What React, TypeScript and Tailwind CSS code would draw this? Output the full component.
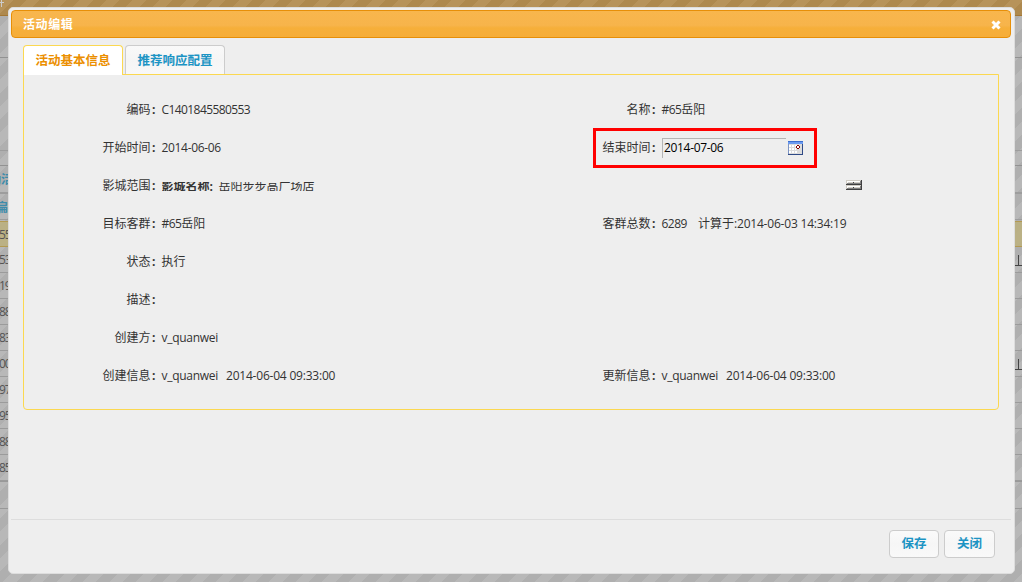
import React from "react";

const cjk = "font-['Open_Sans','Noto_Sans_CJK_SC',sans-serif]";

function L({ children, className = "tracking-[-0.53px]" }: { children: React.ReactNode; className?: string }) {
  return <span className={`whitespace-pre ${className}`}>{children}</span>;
}

function Field({ label, children }: { label: string; children?: React.ReactNode }) {
  return (
    <div className="flex h-[38px] w-[500px] items-center">
      <div className="w-[137.5px] shrink-0 whitespace-nowrap pt-px text-right">
        {label}
        <span className="inline-block w-[11px] pl-[1.5px] text-left font-bold">:</span>
      </div>
      <div className="flex items-center whitespace-pre pt-px">{children}</div>
    </div>
  );
}

function Stamp() {
  return (
    <>
      <span className="w-[64.5px]"><L className="tracking-[-0.28px]">v_quanwei</L></span>
      <L className="tracking-[-0.21px]">2014-06-04 09:33:00</L>
    </>
  );
}

const ids = ["55", "53", "19", "88", "83", "00", "97", "95", "88", "85"];

function PageBehind() {
  return (
    <div className="absolute inset-0 flex flex-col overflow-hidden bg-[repeating-linear-gradient(135deg,#b8b8b8_0px,#b8b8b8_9.4px,#afafaf_9.4px,#afafaf_18.8px)]">
      <div className="h-4 shrink-0 border-b border-[#a47733] bg-[repeating-linear-gradient(135deg,#b7935a_0px,#b7935a_9.4px,#ae894e_9.4px,#ae894e_18.8px)]">
        <svg width="5" height="8" viewBox="0 0 5 8">
          <path d="M0 2.5h4M1.5 0v7" stroke="#ccc" />
        </svg>
      </div>
      <div className="h-[42px] shrink-0 border-b border-[#929292]" />
      <div className="h-[93px] shrink-0 border-b border-[#9d9d9d]" />
      <div className="h-[15px] shrink-0 border-b border-[#929292]" />
      <div className="h-[27px] shrink-0 border-b border-[#9d9d9d] text-[12px] font-bold leading-[27px] text-[#3d8cab]">
        <span className="-ml-[11px]">动活</span>
      </div>
      <div className="h-[27px] shrink-0 border-b border-t border-[#9d9d9d] text-[12px] font-bold leading-[27px] text-[#3d8cab]">
        <span className="-ml-[4px]">扁</span>
      </div>
      <div className="mt-px">
        {ids.map((id, i) => (
          <div
            key={i}
            className={`flex h-[26px] justify-between border-b text-[12px] leading-[26px] tracking-[-1px] text-[#555] ${
              i === 0 ? "border-t border-[#b39a52] bg-[#bbb080]/90" : "border-[#9b9b9b]"
            }`}
          >
            <span className="-ml-px">{id}</span>
            {(i === 1 || i === 5) && (
              <svg width="7" height="12" viewBox="0 0 7 12" className="mt-[8px]" shapeRendering="crispEdges">
                <path d="M3 0h1v10h3v1H0v-1h3z" fill="#444" />
              </svg>
            )}
          </div>
        ))}
      </div>
      <div className="h-[28px] shrink-0 border-b border-t border-[#999]" />
    </div>
  );
}

function CalendarIcon() {
  return (
    <svg width="15" height="14" viewBox="0 0 15 14" shapeRendering="crispEdges">
      <rect width="15" height="14" fill="#7b93c4" />
      <rect x="1" y="3" width="13" height="10" fill="#dcdcdc" />
      <rect width="15" height="1" fill="#3c6fd0" />
      <rect x="0" y="1" width="15" height="2" fill="#6a9af0" />
      <path d="M1 4h2v2H1zM4 4h2v2H4zM7 4h2v2H7zM1 7h2v2H1zM4 7h2v2H4zM7 7h1v2H7zM1 10h2v2H1zM4 10h2v2H4zM7 10h2v2H7z" fill="#fff" />
      <path d="M9 4h2v1H9zM8 5h1v2H8zM11 5h1v2h-1zM9 7h2v1H9z" fill="#850000" />
      <rect x="9" y="5" width="2" height="2" fill="#fff" />
      <path d="M14 3h1v11H0v-1h14z" fill="#2f4a86" />
    </svg>
  );
}

function SpinHalf() {
  return (
    <svg width="16" height="5" viewBox="0 0 16 5" shapeRendering="crispEdges">
      <path d="M0 0h16v5H0z" fill="#d0ccc4" />
      <path d="M1 1h13v1H1zM1 1h1v2H1z" fill="#fff" />
      <path d="M2 2h12v1H2z" fill="#d4d0c8" />
      <path d="M1 3h14v1H1zM14 1h1v3h-1z" fill="#808080" />
      <path d="M0 4h16v1H0zM15 0h1v5h-1z" fill="#404040" />
      <path d="M7 2h1v1H7z" fill="#404040" />
    </svg>
  );
}

export default function App() {
  return (
    <div className={`relative h-[582px] w-[1022px] overflow-hidden text-[12px] leading-[18px] text-[#333] ${cjk}`}>
      <PageBehind />
      <div className="absolute left-2 top-[7px] flex h-[567px] w-[1007px] flex-col rounded-[5px] border border-[#ddd] bg-[#eee] p-[2px]">
        <header className="flex h-[28px] w-[1000px] shrink-0 items-center justify-between rounded-[4px] border border-[#e78f08] bg-[linear-gradient(#f8b64d,#f7b44b_55%,#f6af3a_65%,#f6ad38)] pl-[11px] pr-[9px] text-white">
          <b className="pt-px tracking-[0.6px]">活动编辑</b>
          <svg width="10" height="10" viewBox="0 0 10 10" className="mt-px shrink-0">
            <path d="M1.5 1.5 8.5 8.5M8.5 1.5 1.5 8.5" stroke="#fff" strokeWidth="3" />
          </svg>
        </header>
        <main className="h-[481px] shrink-0 pl-3 pt-[7px]">
          <div className="flex h-[30px] gap-[2px] text-[12.5px] font-bold">
            <div className="relative z-10 flex w-[100px] items-center justify-center rounded-t-[4px] border border-b-0 border-[#fbd850] bg-white text-[#eb8f00]">
              活动基本信息
            </div>
            <div className="flex h-[29px] w-[100px] items-center justify-center rounded-t-[4px] border border-b-0 border-[#ccc] bg-[linear-gradient(#f9f9f9,#f5f5f5_50%,#f8f8f8)] pt-px text-[#1c94c4]">
              推荐响应配置
            </div>
          </div>
          <section className="-mt-px grid h-[336px] w-[976px] grid-cols-[500px_1fr] content-start rounded-b-[4px] border border-[#fbd850] pt-[15px]">
            <Field label="编码"><L className="tracking-[-0.58px]">C1401845580553</L></Field>
            <Field label="名称"><L className="tracking-[-0.6px]">#65</L>岳阳</Field>
            <Field label="开始时间"><L className="tracking-[-0.33px]">2014-06-06</L></Field>
            <div className="relative">
              <Field label="结束时间">
                <div className="ml-[0.5px] flex h-5 w-[124px] items-center border-l border-t border-[#b5b5b5] pb-px pl-px text-black"><L className="tracking-[-0.33px]">2014-07-06</L></div>
                <span className="ml-[2px] mt-px"><CalendarIcon /></span>
              </Field>
              <div className="absolute left-[69px] top-0 h-[40px] w-[224px] border-[3px] border-[#f00]" />
            </div>
            <Field label="影城范围">
              <div className="mt-px h-[9px] overflow-hidden">
                <div className="-mt-[4px] flex"><b className="w-[57px]">影城名称:</b>岳阳步步高广场店</div>
              </div>
            </Field>
            <div className="flex h-[38px] flex-col justify-center pl-[322px]"><SpinHalf /><SpinHalf /></div>
            <Field label="目标客群"><L className="tracking-[-0.6px]">#65</L>岳阳</Field>
            <Field label="客群总数">
              <span className="w-[36.5px]"><L>6289</L></span>计算于<L className="tracking-[-0.2px]">:2014-06-03 14:34:19</L>
            </Field>
            <Field label="状态">执行</Field><div />
            <Field label="描述" /><div />
            <Field label="创建方"><L className="tracking-[-0.28px]">v_quanwei</L></Field><div />
            <Field label="创建信息"><Stamp /></Field>
            <Field label="更新信息"><Stamp /></Field>
          </section>
        </main>
        <footer className="flex w-[1000px] flex-1 justify-end gap-[5px] border-t border-[#ddd] pr-4 pt-[10px] text-[12.5px] font-bold text-[#1c94c4]">
          <button className="h-7 w-[50px] rounded-[4px] border border-[#ccc] bg-[linear-gradient(#fafafa,#f6f6f6_50%,#f9f9f9)]">保存</button>
          <button className="h-7 w-[51px] rounded-[4px] border border-[#ccc] bg-[linear-gradient(#fafafa,#f6f6f6_50%,#f9f9f9)]">关闭</button>
        </footer>
      </div>
    </div>
  );
}
